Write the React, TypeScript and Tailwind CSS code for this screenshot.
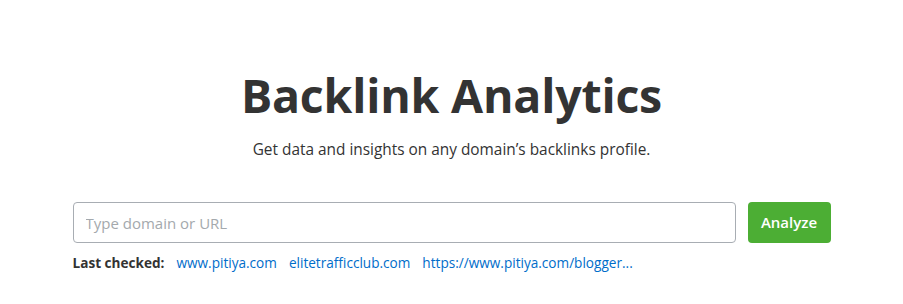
import { type FC } from "react";

const recent = [
  "www.pitiya.com",
  "elitetrafficclub.com",
  "https://www.pitiya.com/blogger...",
];

export const App: FC = () => {
  return (
    <div className="min-h-[304px] w-full bg-white font-['Open_Sans',sans-serif] text-[#333]">
      <div className="mx-auto w-[758px] pt-[63px]">
        <h1 className="text-center text-[46.5px] leading-[64px] font-bold tracking-[-0.2px]">
          Backlink Analytics
        </h1>
        <p className="mt-[13px] text-center text-[15.4px] leading-[20px]">
          Get data and insights on any domain’s backlinks profile.
        </p>
        <form className="mt-[42px] flex gap-3" onSubmit={(e) => e.preventDefault()}>
          <input
            className="h-[41px] flex-1 rounded-[4px] border border-[#a8adb3] px-3 text-[15px] outline-none placeholder:text-[#a4a9ad]"
            placeholder="Type domain or URL"
            type="text"
          />
          <button
            className="h-[41px] w-[83px] rounded-[4px] bg-[#4cae34] text-[15px] font-semibold text-white"
            type="submit"
          >
            Analyze
          </button>
        </form>
        <div className="mt-[11px] flex items-center text-[13.6px] leading-[18px]">
          <span className="mr-3 font-bold">Last checked:</span>
          {recent.map((r) => (
            <a key={r} className="mr-3 text-[#006dca]" href="#">
              {r}
            </a>
          ))}
        </div>
      </div>
    </div>
  );
};

export default App;
